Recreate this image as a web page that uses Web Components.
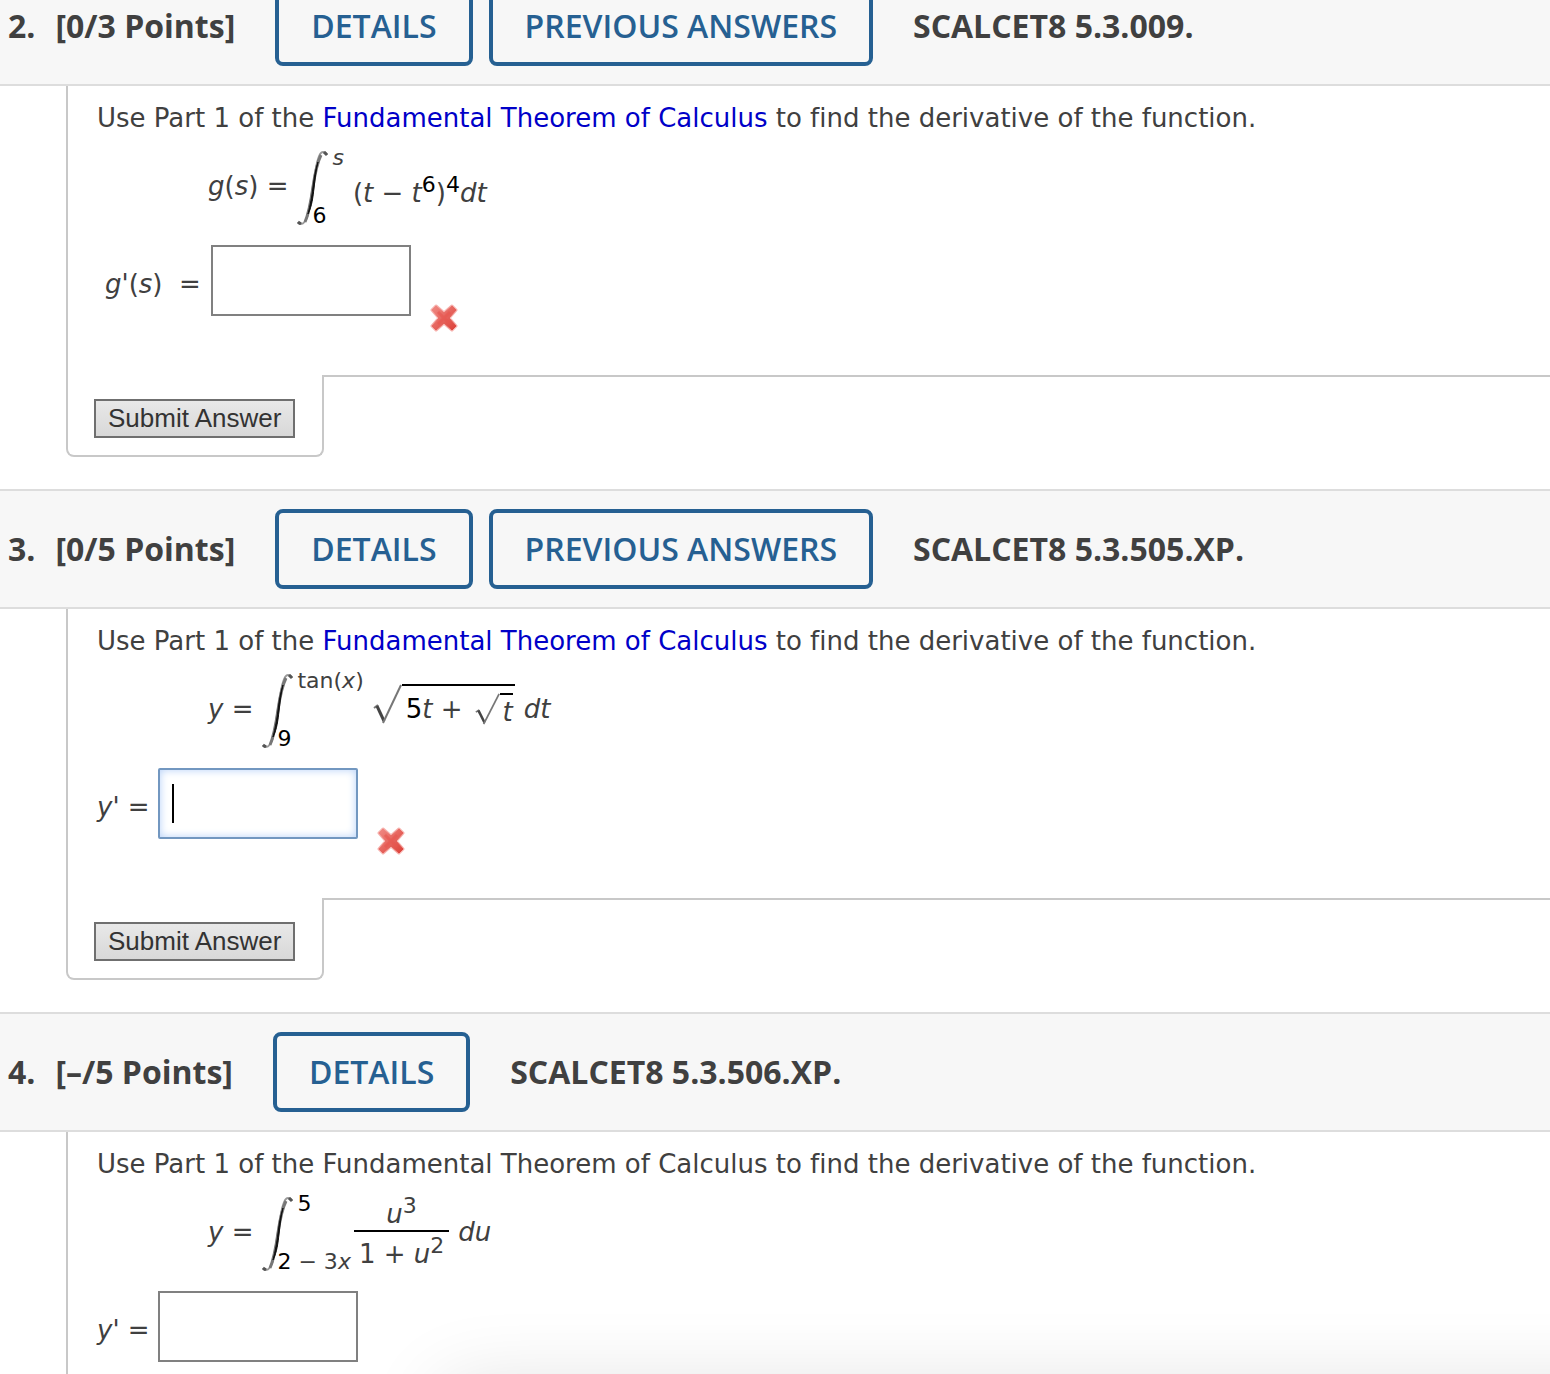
<!DOCTYPE html>
<html lang="en">
<head>
<meta charset="utf-8">
<meta name="viewport" content="width=device-width, initial-scale=1">
<title>Assignment</title>
<style>
    body {
        margin: 0;
        background: #fff;
        color: #404040;
        font: 26px/32px "DejaVu Sans", sans-serif;
        font-variant-ligatures: none;
    }
    a {
        color: #0000c8;
        text-decoration: none;
    }
    i {
        font-style: italic;
    }
    b {
        font-weight: normal;
        color: #000;
    }
    sup {
        font-size: 22px;
        line-height: 0;
        vertical-align: 10px;
    }
</style>
</head>
<body>
<assignment-page>
    <question-card number="2." points="[0/3 Points]" source="SCALCET8 5.3.009." previous submit>
        Use Part 1 of the <a href="#ftc">Fundamental Theorem of Calculus</a> to find the derivative of the function.
        <math-line slot="formula">
            <span><i>g</i>(<i>s</i>) =</span>
            <math-integral><i slot="upper">s</i><b slot="lower">6</b></math-integral>
            <math-low>(<i>t</i> − <i>t</i><sup><b>6</b></sup>)<sup><b>4</b></sup><i>dt</i></math-low>
        </math-line>
        <answer-box slot="answer" label="g prime of s" wide wrong><i>g'</i>(<i>s</i>)&nbsp; =</answer-box>
    </question-card>

    <question-card number="3." points="[0/5 Points]" source="SCALCET8 5.3.505.XP." previous submit>
        Use Part 1 of the <a href="#ftc">Fundamental Theorem of Calculus</a> to find the derivative of the function.
        <math-line slot="formula">
            <span><i>y</i> =</span>
            <math-integral><span slot="upper">tan(<i>x</i>)</span><b slot="lower">9</b></math-integral>
            <math-root><span><b>5</b><i>t</i> +</span><math-root small><i>t</i></math-root></math-root>
            <i>dt</i>
        </math-line>
        <answer-box slot="answer" label="y prime" active wrong><i>y'</i> =</answer-box>
    </question-card>

    <question-card number="4." points="[–/5 Points]" source="SCALCET8 5.3.506.XP.">
        Use Part 1 of the Fundamental Theorem of Calculus to find the derivative of the function.
        <math-line slot="formula">
            <span><i>y</i> =</span>
            <math-integral><b slot="upper">5</b><span slot="lower"><b>2</b> − 3<i>x</i></span></math-integral>
            <math-fraction><span slot="top"><i>u</i><sup>3</sup></span><span slot="bottom">1 + <i>u</i><sup>2</sup></span></math-fraction>
            <i>du</i>
        </math-line>
        <answer-box slot="answer" label="y prime"><i>y'</i> =</answer-box>
    </question-card>
</assignment-page>

<script>
(() => {
    const define = (name, html, setup) => {
        const template = document.createElement('template');
        template.innerHTML = html;
        customElements.define(name, class extends HTMLElement {
            constructor() {
                super();
                this.attachShadow({ mode: 'open' });
                this.shadowRoot.appendChild(template.content.cloneNode(true));
            }
            connectedCallback() {
                if (setup) {
                    setup(this, this.shadowRoot);
                }
            }
        });
    };

    define('assignment-page', `
        <style>
            :host {
                display: block;
                position: relative;
                overflow: hidden;
            }
            main {
                margin-top: -34px;
            }
            /* soft shade rising from the bottom edge of the window */
            .shade {
                position: absolute;
                left: 440px;
                right: -120px;
                bottom: -100px;
                height: 90px;
                border-radius: 20px;
                box-shadow: 0 0 80px rgba(0, 0, 0, 0.12);
                pointer-events: none;
            }
        </style>
        <main><slot></slot></main>
        <div class="shade"></div>
    `);

    define('question-card', `
        <style>
            :host {
                display: block;
            }
            header {
                display: flex;
                align-items: center;
                padding: 18px 8px;
                border-top: 2px solid #ddd;
                border-bottom: 2px solid #ddd;
                background: #f7f7f7;
                font: bold 32px/44px "Open Sans", sans-serif;
            }
            h2 {
                display: flex;
                gap: 20px;
                margin: 0 40px 0 0;
                font: inherit;
            }
            nav {
                display: flex;
                gap: 16px;
                margin-right: 40px;
            }
            button {
                font: 600 32px/44px "Open Sans", sans-serif;
            }
            nav button {
                padding: 14px 32px;
                border: 4px solid #266092;
                border-radius: 8px;
                background: transparent;
                color: #266092;
            }
            .work {
                margin-left: 66px;
                padding: 16px 28px 59px 29px;
                border-left: 2px solid #c8c8c8;
            }
            p {
                margin: 0 0 17px;
            }
            footer {
                display: flex;
                margin: 0 0 32px 66px;
            }
            .tab {
                padding: 24px 27px 17px 26px;
                border: 2px solid #c8c8c8;
                border-top: 0;
                border-radius: 0 0 8px 8px;
            }
            .rule {
                flex: 1;
                border-top: 2px solid #c8c8c8;
            }
            .tab button {
                display: block;
                padding: 2px 12px 3px;
                border: 2px solid #6f6f6f;
                border-radius: 0;
                background: linear-gradient(#e8e8e8, #d8d8d8);
                color: #333;
                font: 26px/30px "Liberation Sans", sans-serif;
            }
            :host(:not([previous])) .previous,
            :host(:not([submit])) footer {
                display: none;
            }
            :host(:not([submit])) .work {
                padding-bottom: 12px;
            }
        </style>
        <header>
            <h2><span class="number"></span><span class="points"></span></h2>
            <nav>
                <button type="button">DETAILS</button>
                <button type="button" class="previous">PREVIOUS ANSWERS</button>
            </nav>
            <span class="source"></span>
        </header>
        <div class="work">
            <p><slot></slot></p>
            <slot name="formula"></slot>
            <slot name="answer"></slot>
        </div>
        <footer>
            <div class="tab"><button type="button">Submit Answer</button></div>
            <div class="rule"></div>
        </footer>
    `, (host, root) => {
        ['number', 'points', 'source'].forEach((name) => {
            root.querySelector('.' + name).textContent = host.getAttribute(name);
        });
    });

    define('math-line', `
        <style>
            :host {
                display: flex;
                align-items: center;
                gap: 9px;
                margin: 0 0 20px 111px;
                white-space: nowrap;
            }
            ::slotted(span),
            ::slotted(i) {
                margin-bottom: 4px;
            }
        </style>
        <slot></slot>
    `);

    define('math-low', `
        <style>
            :host {
                display: block;
                margin-top: 10px;
            }
        </style>
        <slot></slot>
    `);

    define('math-integral', `
        <style>
            :host {
                display: flex;
                font-size: 22px;
                line-height: 24px;
            }
            svg {
                display: block;
                flex: none;
                width: 32px;
                height: 74px;
            }
            div {
                display: flex;
                flex-direction: column;
                justify-content: space-between;
                align-items: flex-start;
                margin: -5px 0 -3px;
            }
            .upper {
                margin-left: 3px;
            }
            .lower {
                margin-left: -17px;
            }
        </style>
        <svg viewBox="0 0 32 74" aria-hidden="true">
            <path d="M30 4Q29 1 26 1C21 1 19 16 16 35C13 55 11 73 4 73Q1 73 1 71"
                fill="none" stroke="#999" stroke-width="2"/>
            <path d="M24 4C20 12 18 22 16 36C14 50 12 62 8 71"
                fill="none" stroke="#777" stroke-width="3"/>
            <path d="M21 11C18 20 17 28 16 36C15 45 13 55 11 63C15 55 16 46 17 37C18 28 19 19 21 11Z"
                fill="#111" stroke="#111" stroke-width="1"/>
            <path d="M27 1L30 4M1 71L4 73" stroke="#555" stroke-width="3"/>
        </svg>
        <div>
            <span class="upper"><slot name="upper"></slot></span>
            <span class="lower"><slot name="lower"></slot></span>
        </div>
    `);

    define('math-root', `
        <style>
            :host {
                display: flex;
                margin-bottom: 10px;
            }
            svg {
                display: block;
                flex: none;
                width: 29px;
                height: 40px;
            }
            .body {
                display: flex;
                align-items: flex-start;
                gap: 12px;
                padding: 7px 0 0 4px;
                border-top: 2px solid #000;
            }
            :host([small]) svg {
                width: 25px;
                height: 32px;
            }
            :host([small]) .body {
                padding: 1px 0 0 3px;
            }
            :host([small]) {
                margin: 0 2px 0 0;
            }
        </style>
        <svg viewBox="0 0 29 40" preserveAspectRatio="none" aria-hidden="true">
            <path d="M1 24L5 21" stroke="#777" stroke-width="2"/>
            <path d="M4 22L11 37" stroke="#444" stroke-width="3"/>
            <path d="M10 39L28 1" fill="none" stroke="#777" stroke-width="2"/>
        </svg>
        <div class="body"><slot></slot></div>
    `);

    define('math-fraction', `
        <style>
            :host {
                display: flex;
                flex-direction: column;
                margin-left: -6px;
                text-align: center;
            }
            .top {
                padding-bottom: 1px;
                border-bottom: 2px solid #000;
            }
            .bottom {
                padding: 7px 5px 0;
            }
            .top,
            .bottom {
                line-height: 30px;
            }
        </style>
        <div class="top"><slot name="top"></slot></div>
        <div class="bottom"><slot name="bottom"></slot></div>
    `);

    define('answer-box', `
        <style>
            :host {
                display: flex;
                align-items: center;
            }
            :host([wide]) {
                padding-left: 8px;
            }
            label {
                margin: 6px 8px 0 0;
            }
            :host([wide]) label {
                margin-right: 10px;
            }
            input {
                box-sizing: border-box;
                width: 200px;
                height: 71px;
                padding: 0 12px;
                border: 2px solid #808080;
                border-radius: 0;
                outline: 0;
                background: #fff;
                font: inherit;
            }
            :host([active]) input {
                border-color: #7297c0;
                border-radius: 2px;
                background: linear-gradient(#000, #000) 12px 50% / 2px 39px no-repeat #fff;
                box-shadow: inset 0 0 8px #b5d0f8;
            }
            svg {
                align-self: flex-end;
                width: 28px;
                height: 28px;
                margin: 0 0 -16px 19px;
            }
            :host(:not([wrong])) svg {
                display: none;
            }
        </style>
        <label for="answer"><slot></slot></label>
        <input id="answer" type="text" autocomplete="off">
        <svg viewBox="0 0 28 28" role="img" aria-label="Incorrect">
            <defs>
                <linearGradient id="red" x1="0" y1="0" x2="1" y2="1">
                    <stop offset="0" stop-color="#f08a84"/>
                    <stop offset="1" stop-color="#dc4038"/>
                </linearGradient>
            </defs>
            <path d="M6 2L14 9L22 2L26 6L19 14L26 22L22 26L14 19L6 26L2 22L9 14L2 6Z"
                fill="url(#red)" stroke="#f6b0ac" stroke-width="3" stroke-linejoin="round"/>
            <path d="M6 2L14 9L22 2L26 6L19 14L26 22L22 26L14 19L6 26L2 22L9 14L2 6Z"
                fill="url(#red)" stroke="url(#red)" stroke-width="1" stroke-linejoin="round"/>
            <path d="M8 8L20 20M20 8L8 20" stroke="#e8564f" stroke-width="3" opacity=".6"/>
        </svg>
    `, (host, root) => {
        root.querySelector('input').setAttribute('aria-label', host.getAttribute('label'));
    });
})();
</script>
</body>
</html>
